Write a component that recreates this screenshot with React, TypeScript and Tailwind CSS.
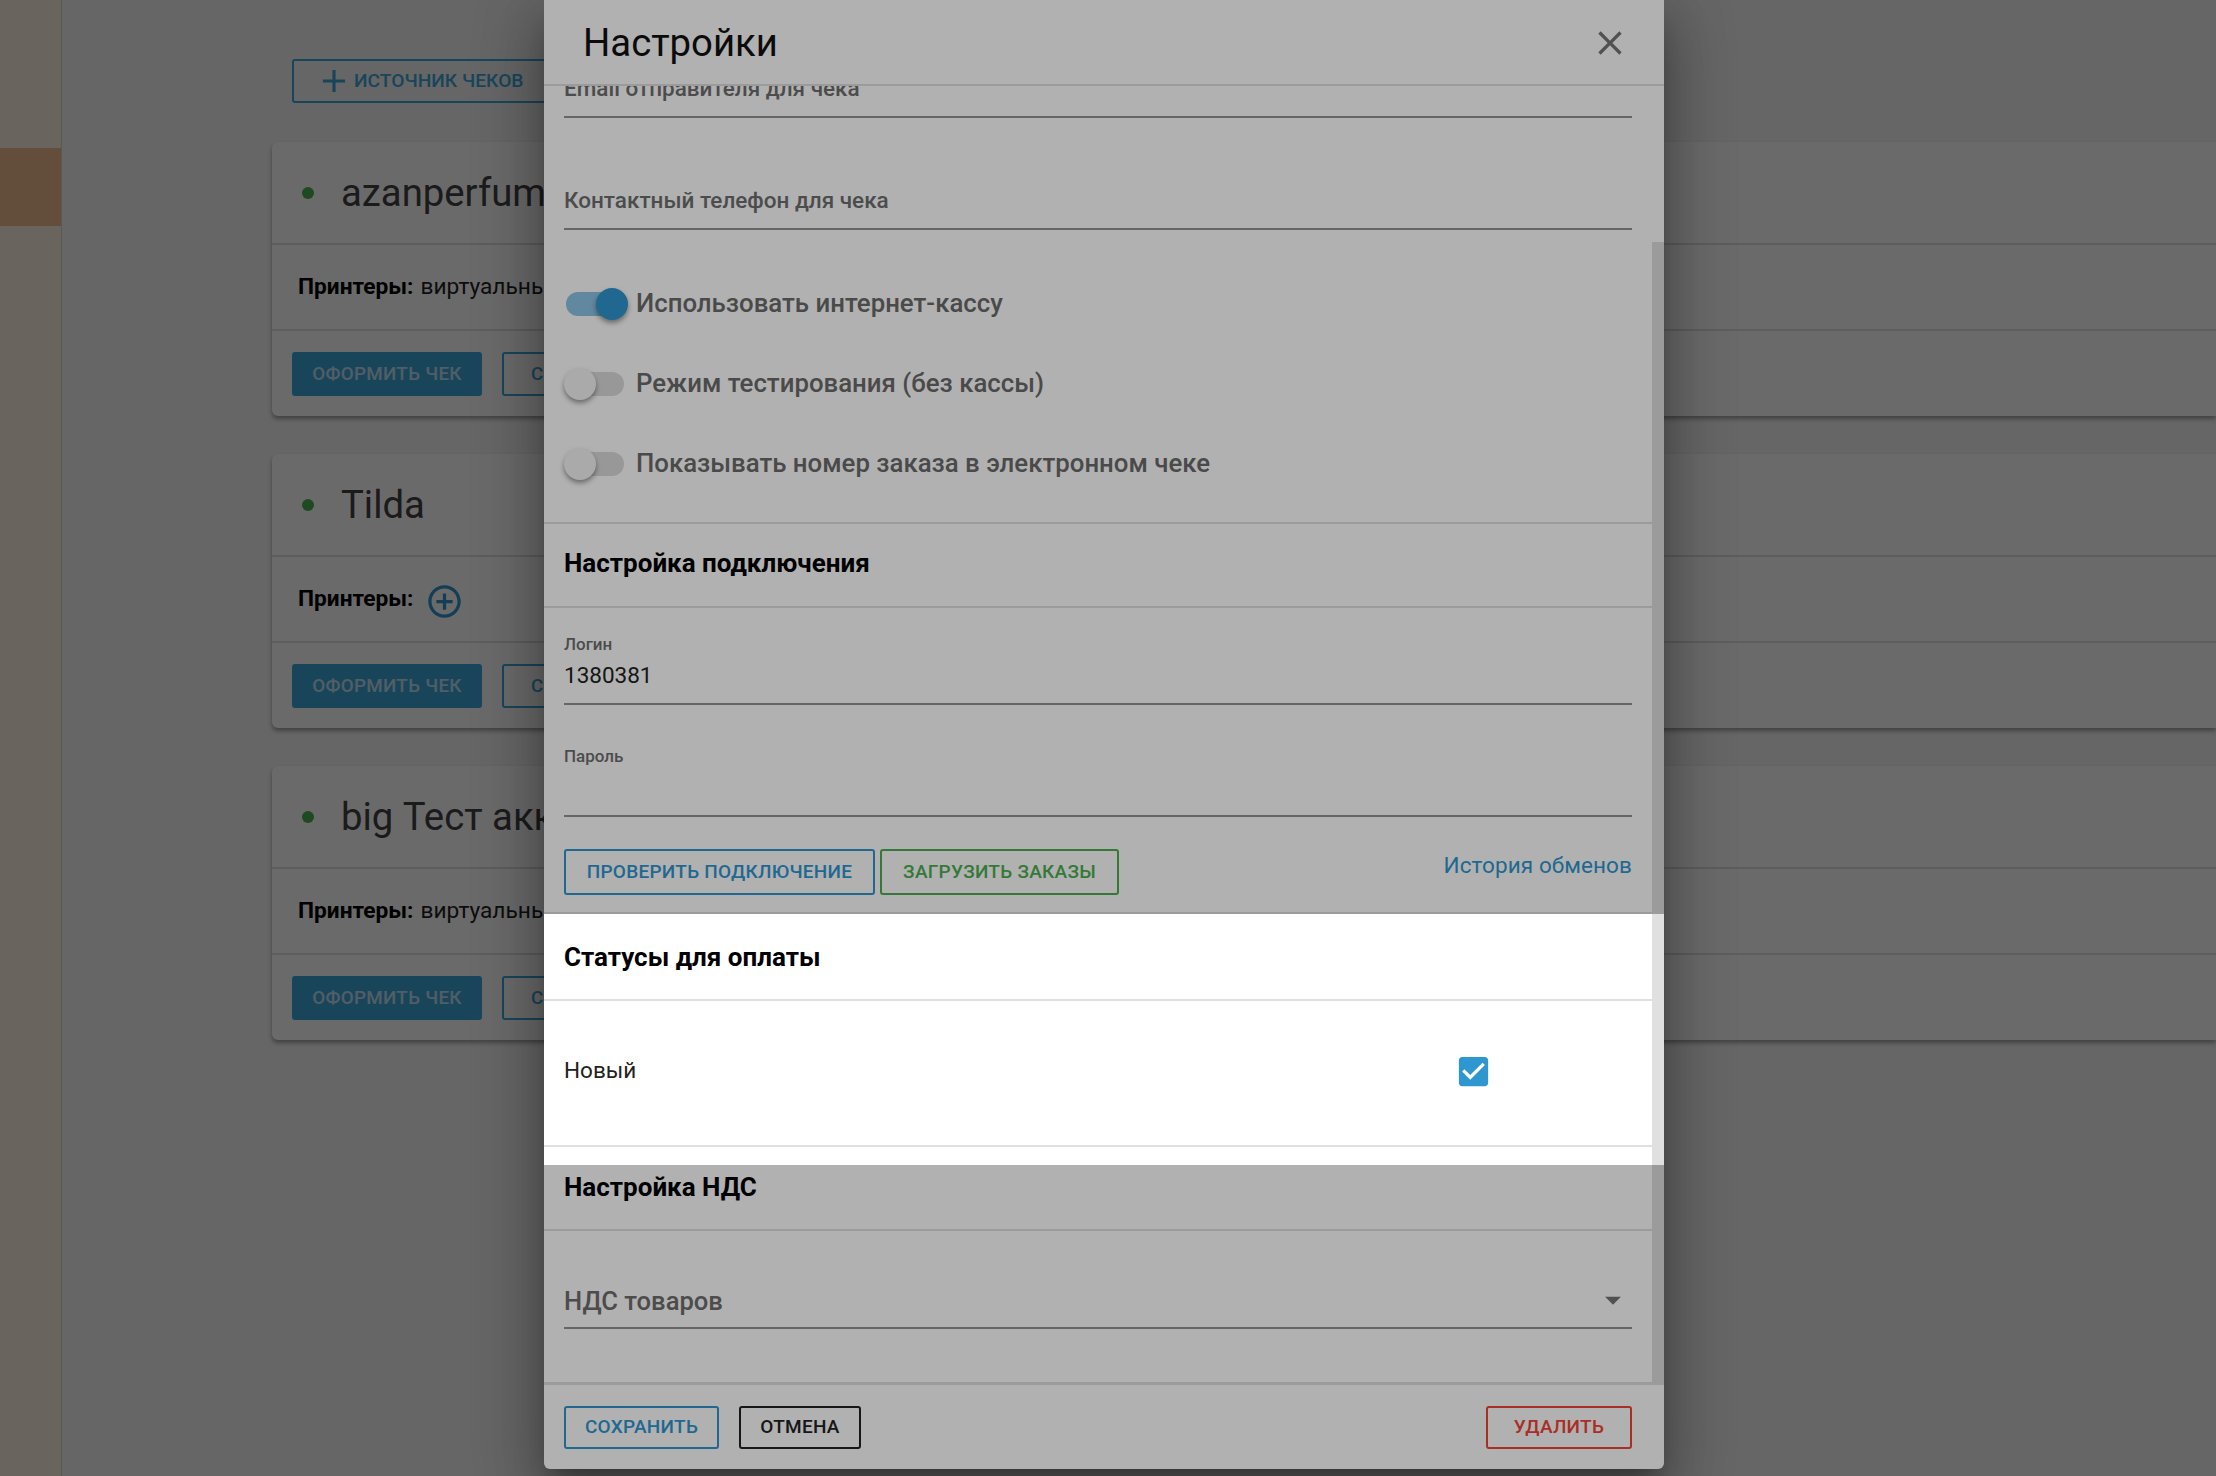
import React from 'react';

const BLUE = '#2f97d0';

const Icon = ({ d, size, color }: { d: string; size: number; color: string }) => (
  <svg width={size} height={size} viewBox="0 0 24 24" fill={color} className="shrink-0">
    <path d={d} />
  </svg>
);

const PLUS = 'M19 13h-6v6h-2v-6H5v-2h6V5h2v6h6v2z';
const PLUS_CIRCLE =
  'M13 7h-2v4H7v2h4v4h2v-4h4v-2h-4V7zm-1-5C6.48 2 2 6.48 2 12s4.48 10 10 10 10-4.48 10-10S17.52 2 12 2zm0 18c-4.41 0-8-3.59-8-8s3.59-8 8-8 8 3.59 8 8-3.59 8-8 8z';
const CLOSE =
  'M19 6.41L17.59 5 12 10.59 6.41 5 5 6.41 10.59 12 5 17.59 6.41 19 12 13.41 17.59 19 19 17.59 13.41 12z';
const CHECKED =
  'M19 3H5c-1.11 0-2 .9-2 2v14c0 1.1.89 2 2 2h14c1.11 0 2-.9 2-2V5c0-1.1-.89-2-2-2zm-9 14l-5-5 1.41-1.41L10 14.17l7.59-7.59L19 8l-9 9z';
const ARROW = 'M7 10l5 5 5-5z';

const sources = [
  { name: 'azanperfume', printers: 'виртуальный принтер' },
  { name: 'Tilda', printers: '' },
  { name: 'big Тест аккаунт', printers: 'виртуальный принтер' },
];

const SourceCard = ({ name, printers }: { name: string; printers: string }) => (
  <div className="h-[274px] rounded-l-md bg-white shadow-[0_3px_4px_rgba(0,0,0,0.35)]">
    <div className="flex h-[103px] items-center border-b-2 border-[#e0e0e0] pl-[30px]">
      <span className="h-3 w-3 rounded-full bg-[#4caf50]" />
      <span className="ml-[27px] text-[38.3px] leading-[48px] text-[#444]">{name}</span>
    </div>
    <div className="flex h-[86px] items-center border-b-2 border-[#e0e0e0] pl-[26px] text-[22.7px] text-[#222]">
      <b className="font-bold text-black">Принтеры:</b>
      {printers ? (
        <span className="ml-[7px] whitespace-nowrap">{printers}</span>
      ) : (
        <span className="ml-[11px] mt-1">
          <Icon d={PLUS_CIRCLE} size={39} color={BLUE} />
        </span>
      )}
    </div>
    <div className="flex gap-5 pl-5 pt-[21px]">
      <button className="h-[44px] w-[190px] rounded-[3px] bg-[#3ea7dc] text-[18.8px] font-medium tracking-[0.3px] text-white/70">
        ОФОРМИТЬ ЧЕК
      </button>
      <button className="h-[44px] w-[190px] rounded-[3px] border-2 border-[#3ea7dc] pl-[27px] text-left text-[18.8px] font-medium text-[#3ea7dc]">
        СКАЧАТЬ
      </button>
    </div>
  </div>
);

const Field = ({ label, className }: { label: string; className: string }) => (
  <div
    className={`ml-5 mr-5 h-[45px] border-b-2 border-[#949494] text-[22.5px] font-medium leading-[30px] text-[#6e6e6e] ${className}`}
  >
    {label}
  </div>
);

const SwitchRow = ({ on, label }: { on?: boolean; label: string }) => (
  <div className="flex h-20 items-center pl-5">
    <div className="relative h-6 w-[58px] shrink-0">
      <div className={`ml-[2px] h-6 w-[58px] rounded-xl ${on ? 'bg-[#8cc5e6]' : 'bg-[#dcdcdc]'}`} />
      <div
        className={`absolute top-[-4px] h-8 w-8 rounded-full shadow-[0_3px_5px_rgba(0,0,0,0.4)] ${
          on ? 'left-[32px] bg-[#2f97d0]' : 'left-0 bg-[#f5f5f5]'
        }`}
      />
    </div>
    <span className="-mt-[2px] ml-[14px] text-[25.8px] font-medium text-[#6b6b6b]">{label}</span>
  </div>
);

const SectionTitle = ({ className, children }: { className: string; children: React.ReactNode }) => (
  <div className={`flex items-center border-b-2 border-[#e0e0e0] pl-5 text-[26px] font-bold text-black ${className}`}>
    {children}
  </div>
);

const OutlineBtn = ({ color, className, children }: { color: string; className: string; children: React.ReactNode }) => (
  <button
    className={`flex items-center justify-center rounded-[3px] border-2 text-[19px] font-medium tracking-[0.25px] ${color} ${className}`}
  >
    {children}
  </button>
);

export default function App() {
  return (
    <div className="relative flex h-[1476px] w-[2216px] overflow-hidden bg-[#f5f5f5] font-['Roboto',sans-serif]">
      {/* sidebar */}
      <aside className="h-full w-[62px] shrink-0 border-r border-[#e0d4c8] bg-[#fff2e6] pt-[148px]">
        <div className="h-[78px] bg-[#efbd92]" />
      </aside>

      <main className="flex-1 pl-[210px] pt-[59px]">
        <button className="ml-5 flex h-[44px] w-[290px] items-center rounded-[3px] border-2 border-[#3ea7dc] pl-[21px] text-[19.2px] font-medium text-[#3ea7dc]">
          <Icon d={PLUS} size={38} color="#3ea7dc" />
          <span className="ml-[1px]">ИСТОЧНИК ЧЕКОВ</span>
        </button>
        <div className="mt-[39px] flex flex-col gap-[38px]">
          {sources.map((s) => (
            <SourceCard key={s.name} name={s.name} printers={s.printers} />
          ))}
        </div>
      </main>

      {/* modal backdrop */}
      <div className="absolute inset-0 bg-black/40" />

      {/* settings dialog */}
      <div className="absolute left-[544px] top-0 flex h-[1469px] w-[1120px] flex-col rounded-b-md bg-white shadow-[0_16px_22px_-10px_rgba(0,0,0,0.3),0_34px_54px_4px_rgba(0,0,0,0.2),0_12px_64px_12px_rgba(0,0,0,0.18)]">
        <header className="flex h-[86px] shrink-0 items-center justify-between border-b-2 border-[#e0e0e0] pl-[39px] pr-[34px] pt-[2px]">
          <h1 className="text-[38.3px] font-normal leading-none text-[#111]">Настройки</h1>
          <Icon d={CLOSE} size={40} color="#757575" />
        </header>

        <div className="flex min-h-0 flex-1 overflow-hidden">
          <div className="min-w-0 flex-1">
            <div className="-mt-[13px]">
              <Field label="Email отправителя для чека" className="" />
              <Field label="Контактный телефон для чека" className="mt-[67px]" />
              <div className="mt-[34px]">
                <SwitchRow on label="Использовать интернет-кассу" />
                <SwitchRow label="Режим тестирования (без кассы)" />
                <SwitchRow label="Показывать номер заказа в электронном чеке" />
              </div>
              <div className="mt-[18px] border-t-2 border-[#e0e0e0]">
                <SectionTitle className="h-[84px] pb-1">Настройка подключения</SectionTitle>
              </div>
              <div className="ml-5 mr-5 mt-[26px] h-[71px] border-b-2 border-[#949494]">
                <div className="text-[17px] font-medium leading-5 text-[#6e6e6e]">Логин</div>
                <div className="mt-[6px] text-[22.5px] leading-[30px] text-[#222]">1380381</div>
              </div>
              <div className="ml-5 mr-5 mt-[41px] h-[71px] border-b-2 border-[#949494]">
                <div className="text-[17px] font-medium leading-5 text-[#6e6e6e]">Пароль</div>
              </div>
              <div className="mt-8 flex items-start gap-[5px] pl-5 pr-5">
                <OutlineBtn color="border-[#2f97d0] text-[#2f97d0]" className="h-[46px] w-[311px]">
                  ПРОВЕРИТЬ ПОДКЛЮЧЕНИЕ
                </OutlineBtn>
                <OutlineBtn color="border-[#4caf50] text-[#4caf50]" className="h-[46px] w-[239px]">
                  ЗАГРУЗИТЬ ЗАКАЗЫ
                </OutlineBtn>
                <span className="ml-auto text-[22.5px] leading-[32px] tracking-[0.1px] text-[#2f97d0]">
                  История обменов
                </span>
              </div>
              <div className="mt-[17px] border-t-2 border-[#e0e0e0]">
                <SectionTitle className="h-[87px] pt-[3px] pb-[2px]">Статусы для оплаты</SectionTitle>
              </div>
              <div className="flex h-[146px] items-center justify-between border-b-2 border-[#e0e0e0] pb-1 pl-5 pr-[159px]">
                <span className="text-[22.5px] text-[#222]">Новый</span>
                <Icon d={CHECKED} size={39} color={BLUE} />
              </div>
              <SectionTitle className="h-[84px] pb-[2px]">Настройка НДС</SectionTitle>
              <div className="ml-5 mr-5 mt-[55px] flex h-[43px] items-start justify-between border-b-2 border-[#949494]">
                <span className="text-[25.6px] font-medium leading-[30px] text-[#6e6e6e]">НДС товаров</span>
                <span className="-mt-[5px]">
                  <Icon d={ARROW} size={38} color="#757575" />
                </span>
              </div>
            </div>
          </div>
          {/* scrollbar */}
          <div className="flex w-3 shrink-0 flex-col pt-[156px]">
            <div className="flex-1 bg-[#e0e0e0]" />
          </div>
        </div>

        <footer className="flex h-[87px] shrink-0 items-start justify-between border-t-[3px] border-[#e0e0e0] pl-5 pr-8 pt-[21px]">
          <div className="flex gap-5">
            <OutlineBtn color="border-[#2f97d0] text-[#2f97d0]" className="h-[43px] w-[155px]">
              СОХРАНИТЬ
            </OutlineBtn>
            <OutlineBtn color="border-[#222] text-[#222]" className="h-[43px] w-[122px]">
              ОТМЕНА
            </OutlineBtn>
          </div>
          <OutlineBtn color="border-[#f44336] text-[#f44336]" className="h-[43px] w-[146px]">
            УДАЛИТЬ
          </OutlineBtn>
        </footer>
      </div>

      {/* tour spotlight on the statuses block */}
      <div className="absolute left-[544px] top-[914px] h-[251px] w-[1120px] shadow-[0_0_0_3000px_rgba(0,0,0,0.306)]" />
    </div>
  );
}
